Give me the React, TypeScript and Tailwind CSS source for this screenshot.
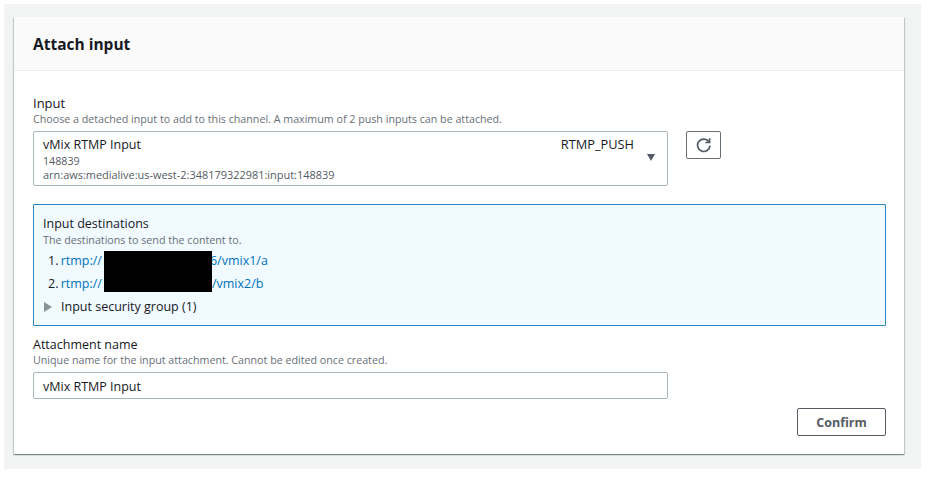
const font = "font-['Open_Sans',sans-serif]";

function RefreshIcon() {
  return (
    <svg width="16" height="16" viewBox="0 0 16 16" fill="none" stroke="#545b64" strokeWidth="1.7">
      <path d="M13.2 5.2A6.2 6.2 0 1 0 14 8.6" />
      <path d="M13.6 1.2v4.3H9.3" />
    </svg>
  );
}

export default function App() {
  return (
    <div className={`${font} w-[928px] h-[478px] bg-white pt-1 pl-1 overflow-hidden`}>
      <div className="w-[917px] h-[465px] bg-[#f2f3f3] pt-[13px] pl-[10px]">
        <div className="w-[890px] h-[437px] bg-white shadow-[0_1px_1px_0_rgba(0,28,36,0.3),1px_1px_1px_0_rgba(0,28,36,0.15),-1px_1px_1px_0_rgba(0,28,36,0.15)]">
          <div className="h-[54px] bg-[#fafafa] border-b border-[#eaeded] pl-[19px] pt-[2px] flex items-center">
            <h2 className="text-[15.5px] font-bold text-[#16191f]">Attach input</h2>
          </div>
          <div className="pt-[23px] pl-[19px]">
            <div className="text-[13px] leading-[18px] text-[#16191f]">Input</div>
            <div className="text-[10.7px] leading-[14px] text-[#687078]">
              Choose a detached input to add to this channel. A maximum of 2 push inputs can be attached.
            </div>
            <div className="mt-[5px] flex items-start">
              <div className="w-[635px] h-[55px] border border-[#aab7b8] rounded-[2px] pl-[9px] pr-[12px] pt-[4px] flex justify-between">
                <div>
                  <div className="text-[12.5px] leading-[17px] text-[#16191f]">vMix RTMP Input</div>
                  <div className="text-[10.7px] leading-[14px] mt-[1px] text-[#545b64]">148839</div>
                  <div className="text-[10.95px] leading-[14px] text-[#545b64]">arn:aws:medialive:us-west-2:348179322981:input:148839</div>
                </div>
                <div className="flex">
                  <div className="text-[12.8px] leading-[17px] text-[#16191f] mr-[13px]">RTMP_PUSH</div>
                  <div className="w-0 h-0 mt-[18px] border-x-[4.5px] border-x-transparent border-t-[7px] border-t-[#545b64]" />
                </div>
              </div>
              <button className="ml-[18px] w-[35px] h-[28px] border border-[#687078] rounded-[2px] flex items-center justify-center">
                <RefreshIcon />
              </button>
            </div>
            <div className="relative mt-[18px] w-[853px] h-[122px] bg-[#f1faff] border border-[#2b87c4] rounded-[1px] pl-[9px] pt-[10px]">
              <div className="text-[12.5px] leading-[17px] text-[#16191f]">Input destinations</div>
              <div className="text-[10.7px] leading-[14px] mt-[1px] text-[#687078]">The destinations to send the content to.</div>
              <div className="mt-[2px] pl-[5px] text-[12.5px] leading-[23px] text-[#16191f]">
                <div>
                  1. <a className="text-[#0073bb] ml-[-1px]">rtmp://<span className="inline-block w-[108px]" />6/vmix1/a</a>
                </div>
                <div>
                  2. <a className="text-[#0073bb] ml-[-1px]">rtmp://<span className="inline-block w-[110px]" />/vmix2/b</a>
                </div>
                <div className="flex items-center">
                  <span className="w-0 h-0 ml-[-4px] mr-[9px] border-y-[5px] border-y-transparent border-l-[8px] border-l-[#879596]" />
                  Input security group (1)
                </div>
              </div>
              <div className="absolute left-[70px] top-[46px] w-[108px] h-[41px] bg-black" />
            </div>
            <div className="mt-[9px] pt-[1px] text-[12.5px] leading-[18px] text-[#16191f]">Attachment name</div>
            <div className="text-[10.7px] leading-[13px] text-[#687078]">Unique name for the input attachment. Cannot be edited once created.</div>
            <div className="mt-[5px] w-[635px] h-[27px] border border-[#aab7b8] rounded-[2px] pl-[9px] pt-[3px] flex items-center text-[12.5px] text-[#16191f]">
              vMix RTMP Input
            </div>
            <div className="mt-[9px] w-[853px] flex justify-end">
              <button className="w-[89px] h-[28px] border border-[#545b64] rounded-[2px] pt-[2px] text-[12.5px] font-bold text-[#545b64]">Confirm</button>
            </div>
          </div>
        </div>
      </div>
    </div>
  );
}
